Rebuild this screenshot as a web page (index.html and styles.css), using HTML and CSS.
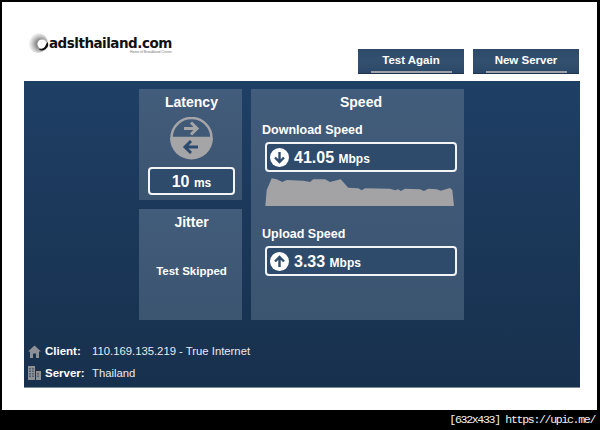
FILE: index.html
```html
<!DOCTYPE html>
<html>
    <head>
        <link rel="stylesheet" href="styles.css">
        <title>Speed Test</title>
    </head>
    <body>
        <div id="page">
            <div id="header">
                <div id="logo">
                    <svg class="logoSwirl" width="21" height="20" viewBox="0 0 21 20">
                        <defs>
                            <radialGradient id="swirlFade" cx="0.62" cy="0.55" r="0.6">
                                <stop offset="0.35" stop-color="#8a8a8a"/>
                                <stop offset="0.7" stop-color="#cfcfcf"/>
                                <stop offset="1" stop-color="#fff"/>
                            </radialGradient>
                        </defs>
                        <circle cx="10" cy="10" r="10" fill="url(#swirlFade)"/>
                        <circle cx="14" cy="11" r="4.6" fill="#fff"/>
                        <path d="M19.6 9 A6 6 0 0 1 10.5 16.2 A6.5 6.5 0 0 0 18 11.5 Z" fill="#111"/>
                    </svg>
                    <div class="logoText">
                        <span class="logoName">adslthailand.com</span>
                        <span class="logoTag">Home of Broadband Citizen</span>
                    </div>
                </div>
                <div id="headerButtons">
                    <div class="topButton">Test Again</div>
                    <div class="topButton">New Server</div>
                </div>
            </div>

            <div id="panel">
                <div id="cards">
                    <div class="card" id="latencyCard">
                        <div class="cardTitle">Latency</div>
                        <svg class="latencyIcon" width="43" height="43" viewBox="0 0 43 43">
                            <path d="M1.5 21 A20 20 0 0 1 41.5 21 Z" fill="none" stroke="#a5a5a8" stroke-width="2.5"/>
                            <path d="M0 21 H43 A21.5 21.5 0 0 1 0 21 Z" fill="#a5a5a8"/>
                            <path d="M14 11.5 H27 M21 5.5 L27 11.5 L21 17.5" fill="none" stroke="#a5a5a8" stroke-width="3"/>
                            <path d="M28 30 H15 M21 24 L15 30 L21 36" fill="none" stroke="#2c4a6c" stroke-width="3"/>
                        </svg>
                        <div class="resultBox latencyBox"><b>10</b> <small>ms</small></div>
                    </div>
                    <div class="card" id="jitterCard">
                        <div class="cardTitle">Jitter</div>
                        <div class="skipped">Test Skipped</div>
                    </div>
                    <div class="card" id="speedCard">
                        <div class="cardTitle">Speed</div>
                        <div class="speedLabel">Download Speed</div>
                        <div class="resultBox speedBox">
                            <svg width="19" height="19" viewBox="0 0 19 19">
                                <circle cx="9.5" cy="9.5" r="9.5" fill="#fff"/>
                                <path d="M9.5 4 V14 M5 9.5 L9.5 14 L14 9.5" fill="none" stroke="#2f4d6f" stroke-width="2.4"/>
                            </svg>
                            <span class="speedValue"><b>41.05</b> <small>Mbps</small></span>
                        </div>
                        <svg class="graph" width="190" height="31" viewBox="0 0 190 31">
                            <path d="M0.3 30 L1.7 14 L6.7 2.3 L11.7 3.3 L17.3 6 L21.7 4 L38.3 4.7 L45 6 L48.3 3.3 L60 3.3 L65 6 L75.7 3.3 L83.3 11.7 L93.3 12.3 L96.7 14.3 L100 12.3 L125 12.7 L130 14.3 L133.3 13.3 L135.7 15 L140 12.7 L155 13.3 L159 15 L163.3 12.7 L171.7 13.3 L175.7 14.7 L185 12 L187.3 14 L189 30 Z" fill="#a3a2a5"/>
                        </svg>
                        <div class="speedLabel uploadLabel">Upload Speed</div>
                        <div class="resultBox speedBox">
                            <svg width="19" height="19" viewBox="0 0 19 19">
                                <circle cx="9.5" cy="9.5" r="9.5" fill="#fff"/>
                                <path d="M9.5 15 V5 M5 9.5 L9.5 5 L14 9.5" fill="none" stroke="#2f4d6f" stroke-width="2.4"/>
                            </svg>
                            <span class="speedValue"><b>3.33</b> <small>Mbps</small></span>
                        </div>
                    </div>
                </div>
                <div id="info">
                    <div class="infoRow">
                        <svg width="13" height="13" viewBox="0 0 13 13">
                            <path d="M6.5 0.5 L13 6.5 H11 V13 H8 V8.5 H5 V13 H2 V6.5 H0 Z" fill="#8d9095"/>
                        </svg>
                        <span class="infoName">Client:</span>
                        <span class="infoValue">110.169.135.219 - True Internet</span>
                    </div>
                    <div class="infoRow">
                        <svg width="13" height="14" viewBox="0 0 13 14">
                            <path d="M0 0 H7 V14 H0 Z M8 5 H13 V14 H8 Z" fill="#8d9095"/>
                            <path d="M2 2 V12 M5 2 V12 M10 7 V12" stroke="#1a334f" stroke-width="1" stroke-dasharray="1.5 1"/>
                        </svg>
                        <span class="infoName">Server:</span>
                        <span class="infoValue">Thailand</span>
                    </div>
                </div>
            </div>
        </div>
        <div id="watermark">[632x433] https://upic.me/</div>
    </body>
</html>
```

FILE: styles.css
```css
html, body {
    margin: 0;
    padding: 0;
}
body {
    width: 600px;
    height: 430px;
    background: #000;
    overflow: hidden;
    font-family: "Liberation Sans", Arial, sans-serif;
    color: #fff;
}
svg {
    display: block;
    flex: none;
}
#page {
    height: 408px;
    margin: 2px 3px 0 2px;
    box-sizing: border-box;
    padding: 0 18px 0 22px;
    background: #fff;
}
#header {
    height: 79px;
    display: flex;
    justify-content: space-between;
}
#logo {
    display: flex;
    gap: 0;
    padding: 31px 0 0 4px;
    height: 24px;
}
.logoText {
    display: flex;
    flex-direction: column;
    align-items: flex-end;
    padding-top: 4px;
}
.logoName {
    font-family: "DejaVu Sans", sans-serif;
    font-weight: bold;
    font-size: 13.5px;
    line-height: 12px;
    letter-spacing: -0.5px;
    color: #111;
}
.logoTag {
    margin-top: 1px;
    font-size: 3.4px;
    line-height: 4px;
    color: #777;
}
#headerButtons {
    display: flex;
    gap: 9px;
    padding-top: 47px;
}
.topButton {
    width: 106px;
    height: 25px;
    box-sizing: border-box;
    padding-top: 4px;
    background: linear-gradient(#2e4a6a, #34506f 50%, #2c4868);
    border-bottom: 1px solid #1d3350;
    position: relative;
    text-align: center;
    font-size: 11.5px;
    font-weight: bold;
    line-height: 15px;
}
.topButton::after {
    content: "";
    position: absolute;
    left: 13px;
    right: 12px;
    bottom: 0;
    height: 2px;
    background: #9ea2a8;
}
#panel {
    width: 556px;
    height: 307px;
    box-sizing: border-box;
    padding-top: 8px;
    background: linear-gradient(#1f3f65, #17304d);
    border-bottom: 1px solid #7c8a99;
}
#cards {
    width: 325px;
    height: 231px;
    margin-left: 115px;
    display: grid;
    grid-template-columns: 103px 213px;
    grid-template-rows: 111px 111px;
    gap: 9px;
}
.card {
    display: flex;
    flex-direction: column;
    box-sizing: border-box;
    background: linear-gradient(#425c7b, #3b5470);
}
#latencyCard {
    align-items: center;
    padding-left: 2px;
}
#jitterCard {
    grid-column: 1;
    grid-row: 2;
    align-items: center;
    padding-left: 2px;
}
#speedCard {
    grid-column: 2;
    grid-row: 1 / 3;
    padding: 0 7px 0 11px;
}
#speedCard .cardTitle {
    margin-left: 3px;
}
.cardTitle {
    margin-top: 5px;
    margin-bottom: 1px;
    font-size: 14px;
    font-weight: bold;
    line-height: 16px;
    text-align: center;
}
.latencyIcon {
    margin-top: 6px;
}
.resultBox {
    box-sizing: border-box;
    border: 2px solid #f2f4f6;
    border-radius: 4px;
    background: #2f4b6b;
    font-size: 16px;
    line-height: 25px;
}
.resultBox b {
    font-weight: bold;
}
.resultBox small {
    font-size: 12px;
    font-weight: bold;
}
.latencyBox {
    width: 87px;
    height: 28px;
    margin-top: 7px;
    text-align: center;
}
.skipped {
    margin-top: 33px;
    font-size: 11.5px;
    font-weight: bold;
    line-height: 14px;
}
.speedLabel {
    margin-top: 12px;
    font-size: 12.5px;
    font-weight: bold;
    line-height: 15px;
}
.uploadLabel {
    margin-top: 20px;
}
.speedBox {
    width: 192px;
    height: 30px;
    margin: 4px 0 0 3px;
    padding-left: 3px;
    display: flex;
    align-items: center;
    gap: 5px;
}
.speedValue {
    padding-top: 2px;
}
.graph {
    margin: 4px 0 0 3px;
}
#info {
    margin: 20px 0 0 4px;
}
.infoRow {
    height: 22px;
    display: flex;
    align-items: center;
}
.infoRow svg {
    margin-right: 4px;
}
.infoName {
    width: 47px;
    font-size: 11.5px;
    font-weight: bold;
}
.infoValue {
    font-size: 11.3px;
    color: #e8ebef;
}
#watermark {
    height: 20px;
    padding-right: 5px;
    text-align: right;
    font-family: "Liberation Mono", monospace;
    font-size: 11.5px;
    letter-spacing: -1.3px;
    line-height: 20px;
    color: #f0f0f0;
}
```
